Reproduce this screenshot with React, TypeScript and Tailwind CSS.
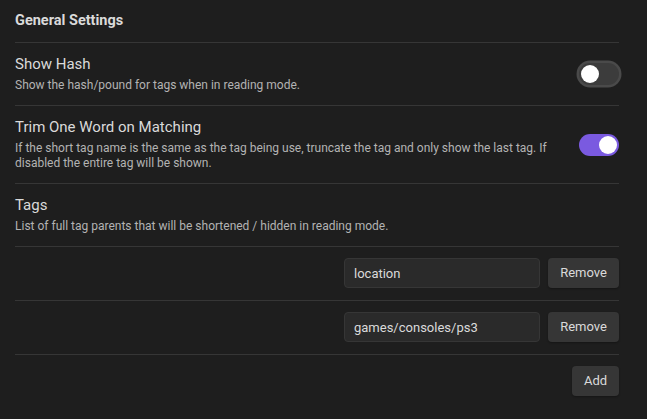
import React, { useState } from 'react';

function Toggle({ on, focused, onClick }: { on: boolean; focused?: boolean; onClick: () => void }) {
  return (
    <button
      type="button"
      onClick={onClick}
      className={`relative flex h-[22px] w-[40px] shrink-0 items-center rounded-full px-[2px] ${
        on ? 'justify-end bg-[#7a5ae0]' : 'justify-start bg-[#3c3c3c]'
      } ${focused ? 'shadow-[0_0_0_2.5px_#4a4a4a]' : ''}`}
    >
      <span className="block h-[18px] w-[18px] rounded-full bg-white" />
    </button>
  );
}

function SettingItem({
  title,
  desc,
  children,
}: {
  title: string;
  desc: string;
  children?: React.ReactNode;
}) {
  return (
    <div className="flex items-center gap-4 border-b border-[#363636] py-3">
      <div className="flex-1">
        <div className="text-[15px] leading-[18px] text-[#dadada]">{title}</div>
        <div className="mt-[5px] text-[12px] leading-[15px] text-[#b3b3b3]">{desc}</div>
      </div>
      {children}
    </div>
  );
}

export default function App() {
  const [showHash, setShowHash] = useState(false);
  const [trim, setTrim] = useState(true);
  const [tags, setTags] = useState(['location', 'games/consoles/ps3']);

  return (
    <div
      className="h-[419px] w-[647px] overflow-hidden bg-[#1e1e1e] pl-[15px] pr-[28px]"
      style={{ fontFamily: 'Roboto, "Liberation Sans", sans-serif' }}
    >
      {/* Header */}
      <div className="flex h-[43px] items-center border-b border-[#363636] pb-[1px] text-[14.5px] font-bold text-[#dadada]">
        General Settings
      </div>

      <SettingItem title="Show Hash" desc="Show the hash/pound for tags when in reading mode.">
        <Toggle on={showHash} focused onClick={() => setShowHash(!showHash)} />
      </SettingItem>

      <SettingItem
        title="Trim One Word on Matching"
        desc="If the short tag name is the same as the tag being use, truncate the tag and only show the last tag. If disabled the entire tag will be shown."
      >
        <Toggle on={trim} onClick={() => setTrim(!trim)} />
      </SettingItem>

      <SettingItem title="Tags" desc="List of full tag parents that will be shortened / hidden in reading mode." />

      {tags.map((tag, i) => (
        <div key={i} className="flex items-center justify-end gap-2 border-b border-[#363636] pb-[12px] pt-[11px]">
          <input
            value={tag}
            onChange={(e) => {
              const next = [...tags];
              next[i] = e.target.value;
              setTags(next);
            }}
            className="h-[30px] w-[196px] rounded-[4px] border border-[#363636] bg-[#2a2a2a] px-[9px] text-[13px] text-[#dadada] outline-none"
          />
          <button
            type="button"
            onClick={() => setTags(tags.filter((_, j) => j !== i))}
            className="h-[30px] w-[71px] rounded-[4px] bg-[#363636] text-[13px] text-[#dadada] shadow-[0_1px_2px_rgba(0,0,0,0.3)]"
          >
            Remove
          </button>
        </div>
      ))}

      <div className="flex justify-end py-[11px]">
        <button
          type="button"
          onClick={() => setTags([...tags, ''])}
          className="h-[30px] w-[47px] rounded-[4px] bg-[#363636] text-[13px] text-[#dadada] shadow-[0_1px_2px_rgba(0,0,0,0.3)]"
        >
          Add
        </button>
      </div>
    </div>
  );
}
